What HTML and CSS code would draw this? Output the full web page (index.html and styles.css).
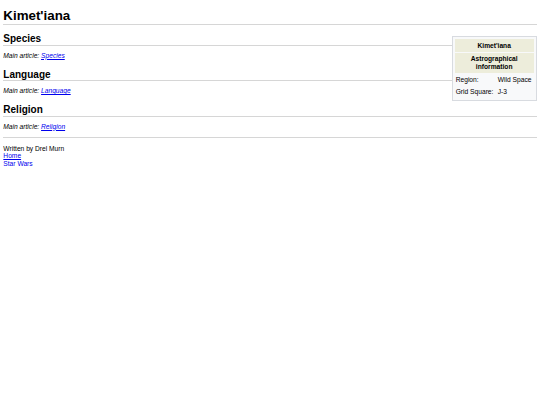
FILE: index.html
```html
<!DOCTYPE html>
<html lang="en">
<head>
    <meta charset="UTF-8">
    <meta name="viewport" content="width=device-width, initial-scale=1.0">
    <title>Kimet'iana</title>
    <link rel="stylesheet" href="styles.css">
</head>
<body>
    <h1 class="page-title">Kimet'iana</h1>

    <table class="infobox">
        <tr>
            <th class="infobox-head" colspan="2">Kimet'iana</th>
        </tr>
        <tr>
            <th class="infobox-head" colspan="2">Astrographical information</th>
        </tr>
        <tr>
            <td class="infobox-label">Region:</td>
            <td class="infobox-value">Wild Space</td>
        </tr>
        <tr>
            <td class="infobox-label">Grid Square:</td>
            <td class="infobox-value">J-3</td>
        </tr>
    </table>

    <h2 class="section-title">Species</h2>
    <p class="hatnote">Main article: <a href="#">Species</a></p>

    <h2 class="section-title">Language</h2>
    <p class="hatnote">Main article: <a href="#">Language</a></p>

    <h2 class="section-title">Religion</h2>
    <p class="hatnote">Main article: <a href="#">Religion</a></p>

    <hr class="divider">

    <div class="footer">
        Written by Drel Murn<br>
        <a href="#">Home</a><br>
        <a href="#">Star Wars</a>
    </div>
</body>
</html>
```

FILE: styles.css
```css
body {
    margin: 0 3.33px;
    font-family: "Liberation Sans", Arial, sans-serif;
    font-size: 6.67px;
    color: #000;
    background: #fff;
}

a {
    color: #0000ee;
}

.page-title {
    font-size: 13.33px;
    line-height: 16px;
    margin: 8px 0;
    border-bottom: 1px solid #d6d6d6;
}

.section-title {
    font-size: 10px;
    line-height: 11.5px;
    margin: 9.5px 0 6px;
    border-bottom: 1px solid #d6d6d6;
}

.page-title + .infobox + .section-title {
    margin-top: 8px;
}

.hatnote {
    font-style: italic;
    line-height: 7.5px;
    margin: 0;
}

.divider {
    border: none;
    border-top: 1px solid #d6d6d6;
    margin: 7px 0 7px;
}

.footer {
    line-height: 7.3px;
}

.infobox {
    float: right;
    width: 85px;
    margin: 3px 0 4px 8px;
    padding: 1px;
    border: 1px solid #d8dbe0;
    border-spacing: 1px;
    background: #f8f9fa;
    line-height: 7.5px;
}

.infobox-head {
    padding: 2.5px 2px;
    background: #ededdb;
    text-align: center;
    font-weight: bold;
}

.infobox-label,
.infobox-value {
    padding: 2px 1px;
    text-align: left;
    vertical-align: top;
    white-space: nowrap;
}
```
